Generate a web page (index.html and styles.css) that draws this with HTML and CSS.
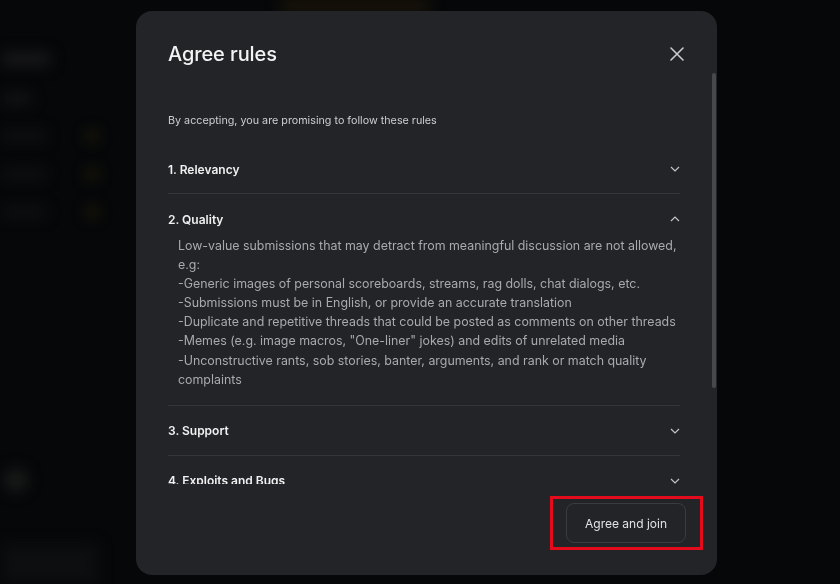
FILE: index.html
```html
<!DOCTYPE html>
<html lang="en">
<head>
<meta charset="utf-8">
<title>Agree rules</title>
<link rel="stylesheet" href="styles.css">
</head>
<body>
<div class="page" aria-hidden="true">
  <aside class="side">
    <div class="side-title"></div>
    <div class="side-sub"></div>
    <div class="side-row"><span class="side-label"></span><span class="side-dot"></span></div>
    <div class="side-row"><span class="side-label"></span><span class="side-dot"></span></div>
    <div class="side-row"><span class="side-label"></span><span class="side-dot"></span></div>
    <div class="side-spacer"></div>
    <div class="side-avatar"></div>
    <div class="side-foot"></div>
  </aside>
  <main class="main">
    <div class="main-banner"></div>
  </main>
</div>

<div class="overlay">
  <div class="modal" role="dialog" aria-labelledby="ttl">
    <header class="modal-head">
      <h1 id="ttl" class="modal-title">Agree rules</h1>
      <button class="close" aria-label="Close">
        <svg width="14" height="14" viewBox="0 0 14 14"><path d="M1 1L13 13M13 1L1 13" stroke="#c9cacd" stroke-width="1.6" stroke-linecap="round" fill="none"/></svg>
      </button>
    </header>
    <div class="body-wrap">
      <div class="modal-body">
        <p class="intro">By accepting, you are promising to follow these rules</p>
        <div class="rule">
          <div class="rule-head"><span>1. Relevancy</span>
            <svg class="chev" width="10" height="6" viewBox="0 0 10 6"><path d="M1 1L5 5L9 1" stroke="#c3c4c7" stroke-width="1.2" fill="none"/></svg>
          </div>
        </div>
        <div class="rule open">
          <div class="rule-head"><span>2. Quality</span>
            <svg class="chev" width="10" height="6" viewBox="0 0 10 6"><path d="M1 5L5 1L9 5" stroke="#c3c4c7" stroke-width="1.2" fill="none"/></svg>
          </div>
          <div class="rule-text">Low-value submissions that may detract from meaningful discussion are not allowed, e.g:<br>-Generic images of personal scoreboards, streams, rag dolls, chat dialogs, etc.<br>-Submissions must be in English, or provide an accurate translation<br>-Duplicate and repetitive threads that could be posted as comments on other threads<br>-Memes (e.g. image macros, "One-liner" jokes) and edits of unrelated media<br>-Unconstructive rants, sob stories, banter, arguments, and rank or match quality complaints</div>
        </div>
        <div class="rule">
          <div class="rule-head"><span>3. Support</span>
            <svg class="chev" width="10" height="6" viewBox="0 0 10 6"><path d="M1 1L5 5L9 1" stroke="#c3c4c7" stroke-width="1.2" fill="none"/></svg>
          </div>
        </div>
        <div class="rule">
          <div class="rule-head"><span>4. Exploits and Bugs</span>
            <svg class="chev" width="10" height="6" viewBox="0 0 10 6"><path d="M1 1L5 5L9 1" stroke="#c3c4c7" stroke-width="1.2" fill="none"/></svg>
          </div>
        </div>
      </div>
      <span class="thumb"></span>
    </div>
    <footer class="modal-foot">
      <button class="agree">Agree and join</button>
      <span class="mark"></span>
    </footer>
  </div>
</div>
</body>
</html>
```

FILE: styles.css
```css
* { box-sizing: border-box; }

html, body {
  margin: 0;
  height: 584px;
  overflow: hidden;
  background: #060709;
  font-family: Inter, "Noto Sans", sans-serif;
}

/* blurred backdrop */
.page {
  display: flex;
  height: 584px;
  filter: blur(7px);
}
.side {
  width: 130px;
  display: flex;
  flex-direction: column;
  padding: 52px 0 0 2px;
}
.side-title { width: 48px; height: 14px; background: #17181a; }
.side-sub { width: 30px; height: 10px; background: #141517; margin-top: 28px; }
.side-row {
  display: flex;
  justify-content: space-between;
  align-items: center;
  width: 96px;
  margin-top: 26px;
  height: 12px;
}
.side-label { width: 44px; height: 10px; background: #101113; }
.side-dot { width: 12px; height: 12px; border-radius: 50%; background: #221d08; }
.side-spacer { flex: 1; }
.side-avatar { width: 24px; height: 24px; border-radius: 50%; background: #191918; margin: 0 0 52px 2px; }
.side-foot { width: 96px; height: 40px; background: #0d0e0f; }
.main { flex: 1; }
.main-banner {
  margin-left: 150px;
  width: 150px;
  height: 12px;
  background: #1c1609;
}

/* modal overlay */
.overlay {
  position: fixed;
  inset: 0;
  padding: 11px 0 0 136px;
}
.modal {
  width: 581px;
  height: 564px;
  background: #232428;
  border-radius: 16px;
  display: flex;
  flex-direction: column;
  overflow: hidden;
}
.modal-head {
  height: 62px;
  flex: none;
  display: flex;
  justify-content: space-between;
  align-items: flex-start;
  padding: 31px 33px 0 32px;
}
.modal-title {
  margin: 0;
  font-size: 20px;
  line-height: 24px;
  font-weight: 500;
  color: #f3f3f4;
  letter-spacing: -0.1px;
}
.close {
  background: none;
  border: 0;
  padding: 0;
  margin-top: 5px;
  width: 14px;
  height: 14px;
  display: flex;
  cursor: pointer;
}

.body-wrap {
  flex: 1;
  min-height: 0;
  position: relative;
  display: flex;
}
.modal-body {
  flex: 1;
  overflow: hidden;
  padding: 40px 37px 110px 32px;
}
.thumb {
  position: absolute;
  right: 1px;
  top: 0;
  width: 4px;
  height: 315px;
  border-radius: 2px;
  background: #47484d;
}

.intro {
  margin: 0 0 15px;
  font-size: 10.75px;
  line-height: 16px;
  color: #cdced1;
}
.rule {
  padding: 17px 0 16px;
  border-bottom: 1px solid #35363a;
}
.rule-head {
  display: flex;
  justify-content: space-between;
  align-items: center;
  height: 16px;
  font-size: 12px;
  font-weight: 600;
  color: #f1f1f2;
}
.chev { flex: none; }
.rule-text {
  margin-top: 9px;
  padding-left: 10px;
  font-size: 12.4px;
  line-height: 19.1px;
  color: #a9aaae;
}

.modal-foot {
  height: 91px;
  flex: none;
  display: flex;
  justify-content: flex-end;
  align-items: flex-start;
  padding: 19px 31px 0 0;
  position: relative;
}
.agree {
  height: 40px;
  width: 120px;
  background: transparent;
  border: 1px solid #3b3c41;
  border-radius: 8px;
  color: #e2e2e4;
  font-family: Inter, "Noto Sans", sans-serif;
  font-size: 12px;
  cursor: pointer;
}
.mark {
  position: absolute;
  left: 414px;
  top: 12px;
  width: 153px;
  height: 54px;
  border: 3px solid #e30b1c;
  pointer-events: none;
}
```
